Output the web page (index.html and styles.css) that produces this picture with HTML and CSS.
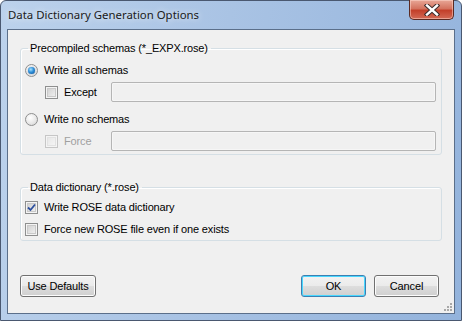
FILE: index.html
```html
<!DOCTYPE html>
<html lang="en">
<head>
  <meta charset="UTF-8">
  <title>Data Dictionary Generation Options</title>
  <link rel="stylesheet" href="styles.css">
</head>
<body>
  <div class="window">
    <div class="titlebar">
      <span class="title">Data Dictionary Generation Options</span>
      <button class="close" title="Close">
        <svg width="16" height="12" viewBox="0 0 16 12">
          <path d="M3 1.5 L13 10.5 M13 1.5 L3 10.5" stroke="#3a2a2a" stroke-width="4.4" stroke-linecap="square"/>
          <path d="M3 1.5 L13 10.5 M13 1.5 L3 10.5" stroke="#fff" stroke-width="2.4" stroke-linecap="square"/>
        </svg>
      </button>
    </div>

    <div class="client">
      <fieldset class="group group-schemas">
        <legend>Precompiled schemas (*_EXPX.rose)</legend>
        <div class="row row-top">
          <span class="radio checked"></span>
          <span class="label">Write all schemas</span>
        </div>
        <div class="row row-sub">
          <span class="check"></span>
          <span class="label sub-label">Except</span>
          <span class="textbox"></span>
        </div>
        <div class="row row-radio2">
          <span class="radio"></span>
          <span class="label">Write no schemas</span>
        </div>
        <div class="row row-sub">
          <span class="check disabled"></span>
          <span class="label sub-label disabled">Force</span>
          <span class="textbox"></span>
        </div>
      </fieldset>

      <fieldset class="group group-dict">
        <legend>Data dictionary (*.rose)</legend>
        <div class="row row-dict">
          <span class="check checked">
            <svg width="9" height="9" viewBox="0 0 9 9">
              <path d="M1 4.5 L3.5 7 L8 1.5" fill="none" stroke="#2c4f9e" stroke-width="1.8"/>
            </svg>
          </span>
          <span class="label">Write ROSE data dictionary</span>
        </div>
        <div class="row row-dict">
          <span class="check"></span>
          <span class="label">Force new ROSE file even if one exists</span>
        </div>
      </fieldset>

      <div class="buttons">
        <button class="btn btn-defaults">Use Defaults</button>
        <span class="spacer"></span>
        <button class="btn btn-ok">OK</button>
        <button class="btn btn-cancel">Cancel</button>
      </div>

      <svg class="grip" width="10" height="10" viewBox="0 0 10 10">
        <g fill="#a8a8a8">
          <rect x="7" y="1" width="2" height="2"/>
          <rect x="4" y="4" width="2" height="2"/>
          <rect x="7" y="4" width="2" height="2"/>
          <rect x="1" y="7" width="2" height="2"/>
          <rect x="4" y="7" width="2" height="2"/>
          <rect x="7" y="7" width="2" height="2"/>
        </g>
      </svg>
    </div>
  </div>
</body>
</html>
```

FILE: styles.css
```css
* {
  margin: 0;
  padding: 0;
  box-sizing: border-box;
}
body {
  width: 462px;
  height: 321px;
  overflow: hidden;
  background: #fff;
  font-family: 'Liberation Sans', Arial, sans-serif;
  font-size: 11px;
  letter-spacing: -0.15px;
  color: #000;
}
.window {
  width: 462px;
  height: 321px;
  display: flex;
  flex-direction: column;
  border: 1px solid #4a5870;
  border-radius: 6px 6px 0 0;
  background: linear-gradient(100deg, #bcd2ec 0%, #a9c3e4 45%, #93b3dc 100%);
}
.titlebar {
  height: 28px;
  display: flex;
  align-items: flex-start;
  justify-content: space-between;
  padding-left: 7px;
}
.title {
  font-family: 'Noto Sans', 'Open Sans', sans-serif;
  font-size: 11.4px;
  letter-spacing: 0;
  color: #1a1a1a;
  margin-top: 6px;
  text-shadow: 0 0 6px rgba(255,255,255,0.9);
}
.close {
  width: 45px;
  height: 20px;
  margin-top: -1px;
  margin-right: 7px;
  border: 1px solid #5b2a22;
  border-top: none;
  border-radius: 0 0 5px 5px;
  background: linear-gradient(#e8a797 0%, #d4735f 45%, #c3402a 55%, #d36a55 100%);
  box-shadow: inset 0 0 0 1px rgba(255,220,210,0.5);
  display: flex;
  align-items: center;
  justify-content: center;
}
.client {
  position: relative;
  flex: 1;
  margin: 0 6px 6px 6px;
  border: 1px solid #5b6f8a;
  background: #f0f0f0;
  padding: 12px 12px 0 12px;
}
.group {
  border: 1px solid #d5dfe5;
  border-radius: 3px;
  box-shadow: inset 1px 1px 0 #fff;
  padding: 0 5px 3px 4px;
}
.group legend {
  margin-left: 3px;
  padding: 0 3px 0 2px;
  line-height: 13px;
  color: #000;
}
.group-dict {
  margin-top: 26px;
}
.row {
  display: flex;
  align-items: center;
}
.row-top {
  height: 18px;
  margin-top: 6px;
}
.row-sub {
  height: 20px;
  margin-top: 3px;
  padding-left: 20px;
}
.row-radio2 {
  height: 18px;
  margin-top: 8px;
}
.row-dict {
  height: 16px;
  margin-top: 5px;
}
.row-dict + .row-dict {
  margin-top: 6px;
}
.label {
  margin-left: 6px;
  white-space: nowrap;
}
.sub-label {
  width: 47px;
}
.label.disabled {
  color: #a0a0a0;
}
.radio {
  width: 13px;
  height: 13px;
  border-radius: 50%;
  border: 1px solid #8e8f8f;
  background: radial-gradient(circle at 40% 35%, #fff 0%, #e6e6e6 60%, #cfcfcf 100%);
  display: flex;
  align-items: center;
  justify-content: center;
  flex-shrink: 0;
}
.radio.checked::after {
  content: '';
  width: 7px;
  height: 7px;
  border-radius: 50%;
  background: radial-gradient(circle at 40% 35%, #a9e3ff 0%, #2e8fd8 45%, #0b4f96 100%);
  box-shadow: 0 0 1px #19569a;
}
.check {
  width: 13px;
  height: 13px;
  border: 1px solid #8e8f8f;
  background: #f4f4f4;
  box-shadow: inset 0 0 0 1px #f4f4f4, inset 0 0 0 2px #c9c9c9;
  background-image: linear-gradient(135deg, #cbcbcb, #f6f6f6);
  flex-shrink: 0;
  display: flex;
  align-items: center;
  justify-content: center;
}
.check.disabled {
  border-color: #c6c6c6;
  background-image: linear-gradient(135deg, #e4e4e4, #f8f8f8);
  box-shadow: inset 0 0 0 1px #f4f4f4, inset 0 0 0 2px #e2e2e2;
}
.textbox {
  flex: 1;
  height: 20px;
  border: 1px solid #b5b5b5;
  border-radius: 2px;
  background: #f0f0f0;
  box-shadow: inset 0 0 0 1px #f6f6f6;
}
.buttons {
  display: flex;
  gap: 8px;
  margin-top: 34px;
  padding-right: 3px;
}
.spacer {
  flex: 1;
}
.btn {
  height: 22px;
  font-family: 'Liberation Sans', Arial, sans-serif;
  font-size: 11px;
  letter-spacing: -0.15px;
  color: #000;
  border: 1px solid #707070;
  border-radius: 3px;
  background: linear-gradient(#f2f2f2 0%, #ebebeb 48%, #dddddd 52%, #cfcfcf 100%);
  box-shadow: inset 0 0 0 1px #fcfcfc;
}
.btn-defaults {
  width: 76px;
}
.btn-ok {
  width: 65px;
  border-color: #3c7fb1;
  box-shadow: inset 0 0 0 1px #48d7ff;
}
.btn-cancel {
  width: 65px;
}
.grip {
  position: absolute;
  right: 1px;
  bottom: 1px;
}
```
